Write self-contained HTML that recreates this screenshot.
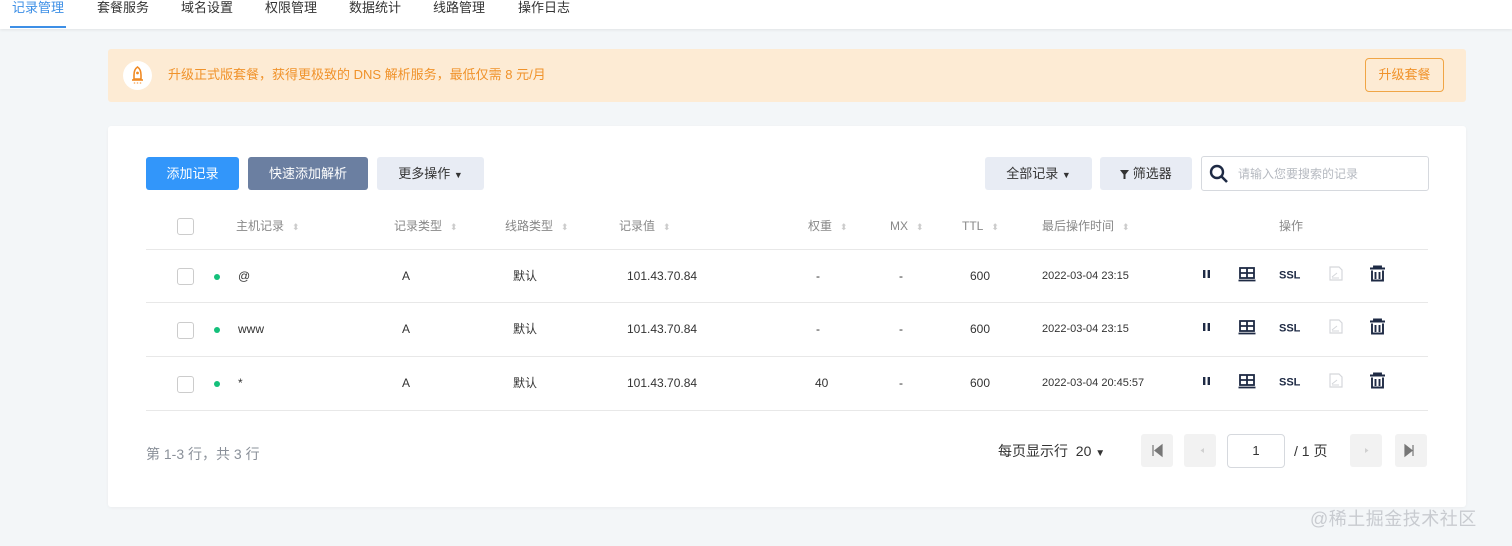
<!DOCTYPE html>
<html><head><meta charset="utf-8"><style>
*{margin:0;padding:0;box-sizing:border-box}
body{width:1512px;height:546px;background:#f3f6f8;font-family:"Liberation Sans","Noto Sans CJK SC",sans-serif;position:relative;overflow:hidden;color:#333}
.a{position:absolute;white-space:nowrap}
.nav{position:absolute;left:0;top:0;width:1512px;height:29px;background:#fff;box-shadow:0 1px 3px rgba(0,0,0,.08)}
.nav span{position:absolute;top:0;font-size:13px;color:#333;line-height:16px}
.btn{position:absolute;top:157px;height:33px;border-radius:3px;font-size:13px;line-height:33px;text-align:center}
.h{position:absolute;top:218px;font-size:12px;color:#888;line-height:16px}
.h i{font-style:normal;color:#ccc;font-size:9px;margin-left:8px}
.line{position:absolute;left:146px;width:1282px;height:1px;background:#e8e8e8}
.cb{position:absolute;left:177px;width:17px;height:17px;border:1px solid #ccc;border-radius:3px;background:#fff}
.c{position:absolute;font-size:12px;color:#333;line-height:14px}
.dot{position:absolute;left:214px;width:6px;height:6px;border-radius:50%;background:#14c07b}
.pg{position:absolute;top:434px;width:32px;height:33px;background:#f2f2f2;border-radius:3px}
</style></head><body>
<div class="nav">
<span style="left:12px;color:#3d8fe6">记录管理</span>
<div class="a" style="left:10px;top:26px;width:56px;height:2px;background:#3d8fe6"></div>
<span style="left:97px">套餐服务</span><span style="left:181px">域名设置</span><span style="left:265px">权限管理</span><span style="left:349px">数据统计</span><span style="left:433px">线路管理</span><span style="left:518px">操作日志</span>
</div>
<div class="a" style="left:108px;top:49px;width:1358px;height:53px;background:#fdebd4;border-radius:3px"></div>
<div class="a" style="left:123px;top:61px;width:29px;height:29px;border-radius:50%;background:#fff"></div>
<svg class="a" style="left:129px;top:66px" width="17" height="19" viewBox="0 0 17 19"><path d="M8.5 1C5.5 3 5 6 5 9v4h7V9c0-3-.5-6-3.5-8z" fill="none" stroke="#f08a24" stroke-width="1.6"/><circle cx="8.5" cy="7" r="1.4" fill="#f08a24"/><path d="M3 14h11" stroke="#f08a24" stroke-width="1.6"/><path d="M5.5 16.5v1M8.5 16.5v1M11.5 16.5v1" stroke="#f08a24" stroke-width="1.4"/></svg>
<div class="a" style="left:168px;top:67px;font-size:13px;color:#f0922a;line-height:16px">升级正式版套餐，获得更极致的 DNS 解析服务，最低仅需 8 元/月</div>
<div class="a" style="left:1365px;top:58px;width:79px;height:34px;border:1px solid #f0a545;border-radius:4px;color:#f0922a;font-size:13px;line-height:32px;text-align:center">升级套餐</div>

<div class="a" style="left:108px;top:126px;width:1358px;height:381px;background:#fff;border-radius:3px;box-shadow:0 1px 3px rgba(0,0,0,.04)"></div>
<div class="btn" style="left:146px;width:93px;background:#3296fa;color:#fff">添加记录</div>
<div class="btn" style="left:248px;width:120px;background:#6b7fa1;color:#fff">快速添加解析</div>
<div class="btn" style="left:377px;width:107px;background:#e8ecf4;color:#333">更多操作 <span style="font-size:9px">▼</span></div>
<div class="btn" style="left:985px;width:107px;background:#e8ecf4;color:#333">全部记录 <span style="font-size:9px">▼</span></div>
<div class="btn" style="left:1100px;width:92px;background:#e8ecf4;color:#333"><svg width="9" height="9" viewBox="0 0 9 9" style="vertical-align:-1px"><path d="M0 0h9L5.5 4.5V9h-2V4.5z" fill="#333"/></svg> 筛选器</div>
<div class="a" style="left:1201px;top:156px;width:228px;height:35px;border:1px solid #d6d9de;border-radius:3px;background:#fff"></div>
<svg class="a" style="left:1209px;top:164px" width="20" height="20" viewBox="0 0 20 20"><circle cx="8" cy="8" r="6" fill="none" stroke="#1e2a44" stroke-width="2.4"/><path d="M12.5 12.5l5.5 5.5" stroke="#1e2a44" stroke-width="2.6"/></svg>
<div class="a" style="left:1238px;top:167px;font-size:12px;color:#b5b9c0;line-height:14px">请输入您要搜索的记录</div>

<div class="cb" style="top:218px"></div>
<div class="h" style="left:236px">主机记录<i>⬍</i></div>
<div class="h" style="left:394px">记录类型<i>⬍</i></div>
<div class="h" style="left:505px">线路类型<i>⬍</i></div>
<div class="h" style="left:619px">记录值<i>⬍</i></div>
<div class="h" style="left:808px">权重<i>⬍</i></div>
<div class="h" style="left:890px">MX<i>⬍</i></div>
<div class="h" style="left:962px">TTL<i>⬍</i></div>
<div class="h" style="left:1042px">最后操作时间<i>⬍</i></div>
<div class="h" style="left:1279px">操作</div>
<div class="line" style="top:249px"></div>
<div class="line" style="top:302px"></div>
<div class="line" style="top:356px"></div>
<div class="line" style="top:410px"></div>

<div class="cb" style="top:268px"></div><div class="dot" style="top:274px"></div>
<div class="c" style="left:238px;top:269px">@</div><div class="c" style="left:402px;top:269px">A</div><div class="c" style="left:513px;top:269px">默认</div><div class="c" style="left:627px;top:269px">101.43.70.84</div><div class="c" style="left:816px;top:269px">-</div><div class="c" style="left:899px;top:269px">-</div><div class="c" style="left:970px;top:269px">600</div><div class="c" style="left:1042px;top:269px;font-size:11px">2022-03-04 23:15</div>

<div class="cb" style="top:322px"></div><div class="dot" style="top:327px"></div>
<div class="c" style="left:238px;top:322px">www</div><div class="c" style="left:402px;top:322px">A</div><div class="c" style="left:513px;top:322px">默认</div><div class="c" style="left:627px;top:322px">101.43.70.84</div><div class="c" style="left:816px;top:322px">-</div><div class="c" style="left:899px;top:322px">-</div><div class="c" style="left:970px;top:322px">600</div><div class="c" style="left:1042px;top:322px;font-size:11px">2022-03-04 23:15</div>

<div class="cb" style="top:376px"></div><div class="dot" style="top:381px"></div>
<div class="c" style="left:238px;top:376px">*</div><div class="c" style="left:402px;top:376px">A</div><div class="c" style="left:513px;top:376px">默认</div><div class="c" style="left:627px;top:376px">101.43.70.84</div><div class="c" style="left:815px;top:376px">40</div><div class="c" style="left:899px;top:376px">-</div><div class="c" style="left:970px;top:376px">600</div><div class="c" style="left:1042px;top:376px;font-size:11px">2022-03-04 20:45:57</div>

<svg class="a" style="left:1195px;top:262px" width="200" height="140" viewBox="0 0 200 140">
<defs><g id="r">
<rect x="8" y="8" width="2.4" height="8" fill="#1e2a44"/><rect x="12.6" y="8" width="2.4" height="8" fill="#1e2a44"/>
<rect x="45" y="6" width="14" height="10" fill="none" stroke="#1e2a44" stroke-width="1.8"/><path d="M52 6v10M45 11h14M43.5 18.5h17" stroke="#1e2a44" stroke-width="1.8"/>
<text x="84" y="16.5" font-family="Liberation Sans" font-weight="bold" font-size="11" fill="#1e2a44">SSL</text>
<path d="M135 5h9l3 3v10h-12z" fill="none" stroke="#d5d7db" stroke-width="1.2"/><path d="M137 15l5-4M137 16h7" stroke="#d5d7db" stroke-width="1"/>
<path d="M175 6.5h15M179 6.5v-2h7v2M177 8.5v10h11v-10M180.5 10v7M184.5 10v7" fill="none" stroke="#1e2a44" stroke-width="1.9"/>
</g></defs>
<use href="#r"/><use href="#r" y="53"/><use href="#r" y="107"/>
</svg>

<div class="a" style="left:146px;top:446px;font-size:14px;color:#8a9099;line-height:17px">第 1-3 行，共 3 行</div>
<div class="a" style="left:998px;top:443px;font-size:14px;color:#333;line-height:17px">每页显示行 &nbsp;20 <span style="font-size:10px">▼</span></div>
<div class="pg" style="left:1141px"></div><div class="pg" style="left:1184px"></div><div class="pg" style="left:1350px"></div><div class="pg" style="left:1395px"></div>
<svg class="a" style="left:1141px;top:434px" width="290" height="33"><path d="M12 11v11M21 11l-7 5.5 7 5.5z" stroke="#777" fill="#777" stroke-width="1.2"/><path d="M63 14v5l-3.5-2.5z" fill="#d0d0d0"/><path d="M224 14v5l3.5-2.5z" fill="#d0d0d0"/><path d="M264 11l7 5.5-7 5.5zM272 11v11" stroke="#777" fill="#777" stroke-width="1.2"/></svg>
<div class="a" style="left:1227px;top:434px;width:58px;height:34px;border:1px solid #d6d9de;border-radius:4px;background:#fff;font-size:13px;text-align:center;line-height:32px">1</div>
<div class="a" style="left:1294px;top:443px;font-size:14px;color:#333;line-height:17px">/ 1 页</div>
<div class="a" style="left:1310px;top:509px;font-size:18px;color:#c8cbd0;line-height:20px;letter-spacing:0.5px">@稀土掘金技术社区</div>
</body></html>
